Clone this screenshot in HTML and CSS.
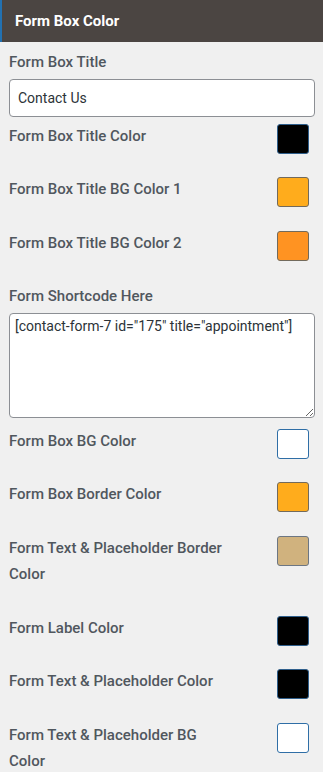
FILE: index.html
```html
<!DOCTYPE html>
<html lang="en">
<head>
<meta charset="utf-8">
<title>Form Box Color</title>
<link rel="stylesheet" href="styles.css">
</head>
<body>
<div class="panel">
  <h3 class="panel-head">Form Box Color</h3>
  <div class="panel-body">
    <div class="field">
      <label class="label label-top" for="fbt">Form Box Title</label>
      <input class="text-input" id="fbt" type="text" value="Contact Us">
    </div>

    <div class="row first">
      <span class="label">Form Box Title Color</span>
      <span class="swatch sw-black"></span>
    </div>
    <div class="row">
      <span class="label">Form Box Title BG Color 1</span>
      <span class="swatch sw-orange1"></span>
    </div>
    <div class="row">
      <span class="label">Form Box Title BG Color 2</span>
      <span class="swatch sw-orange2"></span>
    </div>

    <div class="field">
      <label class="label" for="fsc">Form Shortcode Here</label>
      <textarea class="text-area" id="fsc">[contact-form-7 id="175" title="appointment"]</textarea>
    </div>

    <div class="row after-area">
      <span class="label">Form Box BG Color</span>
      <span class="swatch sw-white"></span>
    </div>
    <div class="row">
      <span class="label">Form Box Border Color</span>
      <span class="swatch sw-orange1"></span>
    </div>
    <div class="row">
      <span class="label">Form Text &amp; Placeholder Border Color</span>
      <span class="swatch sw-tan"></span>
    </div>
    <div class="row">
      <span class="label">Form Label Color</span>
      <span class="swatch sw-black"></span>
    </div>
    <div class="row">
      <span class="label">Form Text &amp; Placeholder Color</span>
      <span class="swatch sw-black"></span>
    </div>
    <div class="row">
      <span class="label">Form Text &amp; Placeholder BG Color</span>
      <span class="swatch sw-white"></span>
    </div>
  </div>
</div>
</body>
</html>
```

FILE: styles.css
```css
html, body {
  margin: 0;
  padding: 0;
}
body {
  background: #f0f0f0;
  font-family: Roboto, "Liberation Sans", Arial, sans-serif;
  color: #50575e;
  overflow: hidden;
}
.panel-head {
  margin: 0;
  height: 42px;
  line-height: 42px;
  background: #4b4542;
  border-left: 2px solid #2271b1;
  padding-left: 13px;
  color: #ffffff;
  font-size: 15px;
  font-weight: 700;
}
.panel-body {
  padding: 0 8px 0 9px;
}
.label {
  display: block;
  font-size: 15px;
  font-weight: 500;
  line-height: 26.5px;
  color: #50575e;
}
.label-top {
  margin-top: 7px;
}
.text-input {
  display: block;
  box-sizing: border-box;
  width: 100%;
  height: 38px;
  margin: 3px 0 0;
  padding: 0 8px;
  border: 1px solid #8c8f94;
  border-radius: 4px;
  background: #ffffff;
  font-family: Roboto, "Liberation Sans", Arial, sans-serif;
  font-size: 14px;
  color: #2c3338;
  outline: none;
}
.text-area {
  display: block;
  box-sizing: border-box;
  width: 100%;
  height: 105px;
  margin: 3px 0 0;
  padding: 2px 5px;
  border: 1px solid #8c8f94;
  border-radius: 4px;
  background: #ffffff;
  font-family: Roboto, "Liberation Sans", Arial, sans-serif;
  font-size: 14px;
  line-height: 20px;
  color: #2c3338;
  resize: vertical;
  outline: none;
}
.row {
  display: flex;
  align-items: flex-start;
  justify-content: space-between;
  margin-bottom: 27px;
}
.row.first {
  margin-top: 6px;
}
.row.after-area {
  margin-top: 10px;
}
.row .label {
  flex: 1 1 auto;
  max-width: 215px;
}
.swatch {
  flex: 0 0 auto;
  box-sizing: border-box;
  width: 32px;
  height: 30px;
  margin: 1px 6px -5px 0;
  border: 1px solid #2271b1;
  border-radius: 3px;
}
.sw-black { background: #000000; border-color: #2f5f8c; }
.sw-white { background: #ffffff; border-color: #2f6ea6; }
.sw-orange1 { background: #ffac1c; border-color: #726a5c; }
.sw-orange2 { background: #ff9322; border-color: #726a5c; }
.sw-tan { background: #d0b27e; border-color: #6c7683; }
```
